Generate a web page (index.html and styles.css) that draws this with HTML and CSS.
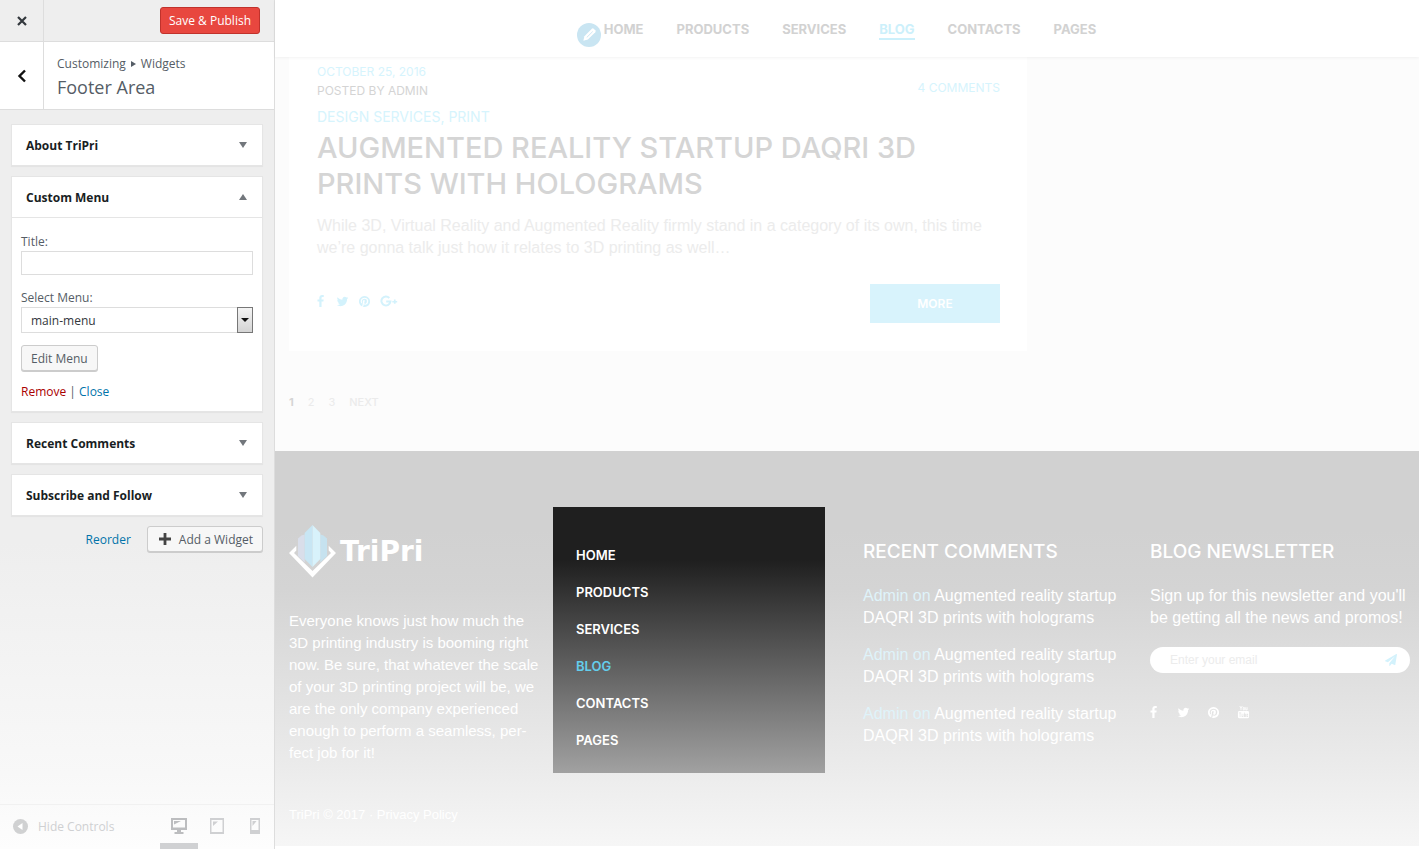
FILE: index.html
```html
<!DOCTYPE html>
<html lang="en">
<head>
<meta charset="utf-8">
<title>Customize: Footer Area</title>
<link rel="stylesheet" href="styles.css">
</head>
<body>
<svg class="sprite" aria-hidden="true">
  <symbol id="facebook" viewBox="0 0 1792 1792"><path d="M1343 12v264h-157q-86 0-116 36t-30 108v189h293l-39 296h-254v759h-306v-759h-255v-296h255v-218q0-186 104-288.5t277-102.5q147 0 228 12z"/></symbol>
  <symbol id="twitter" viewBox="0 0 1792 1792"><path d="M1684 408q-67 98-162 167 1 14 1 42 0 130-38 259.5t-115.5 248.5-184.5 210.5-258 146-323 54.5q-271 0-496-145 35 4 78 4 225 0 401-138-105-2-188-64.5t-114-159.5q33 5 61 5 43 0 85-11-112-23-185.5-111.5t-73.5-205.5v-4q68 38 146 41-66-44-105-115t-39-154q0-88 44-163 121 149 294.5 238.5t371.5 99.5q-8-38-8-74 0-134 94.5-228.5t228.5-94.5q140 0 236 102 109-21 205-78-37 115-142 178 93-10 186-50z"/></symbol>
  <symbol id="pinterest" viewBox="0 0 1792 1792"><path d="M1664 896q0 209-103 385.5t-279.5 279.5-385.5 103q-111 0-218-32 59-93 78-164 9-34 54-211 20 39 73 67.5t114 28.5q121 0 216-68.5t147-188.5 52-270q0-114-59.5-214t-172.5-163-255-63q-105 0-196 29t-154.5 77-109 110.5-67 129.5-21.5 134q0 104 40 183t117 111q30 12 38-20 2-7 8-31t8-30q6-23-11-43-51-61-51-151 0-151 104.5-259.5t273.5-108.5q151 0 235.5 82t84.5 213q0 170-68.5 289t-175.5 119q-61 0-98-43.5t-23-104.5q8-35 26.5-93.5t30-103 11.5-75.5q0-50-27-83t-77-33q-62 0-105 57t-43 142q0 73 25 122l-99 418q-17 70-13 177-206-91-333-281t-127-423q0-209 103-385.5t279.5-279.5 385.5-103 385.5 103 279.5 279.5 103 385.5z"/></symbol>
  <symbol id="google" viewBox="0 0 18 13"><path d="M9.3 3A4.5 4.5 0 1 0 10.4 6.6H6.2" fill="none" stroke="currentColor" stroke-width="2"/><path d="M13.9 4.6h1.7v1.3h1.6v1.6h-1.6v1.3h-1.7v-1.3h-1.6v-1.600h1.600z"/></symbol>
  <symbol id="youtube" viewBox="0 0 14 14"><path d="M3 0l1.300 2.500V4.500M5.700 0L4.300 2.500M6.700 1.500h1.200v2.700H6.700zM9.400 1.300v2.900h1.500V1.300" fill="none" stroke="currentColor" stroke-width=".9"/><path fill-rule="evenodd" d="M2.500 5.500h9Q13 5.500 13 7v4.500q0 1.800-1.500 1.800h-9Q1 13.300 1 11.500V7Q1 5.500 2.500 5.500zM2 7v.8h.9v4h.8v-4h.9V7zM5 8.400v3.400h1.900V8.400h-.6v2.700h-.6V8.400zM7.600 7v4.800h1.900V8.400h-1.200V7zM10.200 8.400v3.400h1.800v-1h-1v-.6h1V8.400z"/></symbol>
  <symbol id="plane" viewBox="0 0 1792 1792"><path d="M1764 11q33 24 27 64l-256 1536q-5 29-32 45-14 8-31 8-11 0-24-5l-453-185-242 295q-18 23-49 23-13 0-22-4-19-7-30.5-23.5t-11.500-36.500v-349l864-1059-1069 925-395-162q-37-14-40-55-2-40 32-59l1664-960q15-9 32-9 20 0 36 11z"/></symbol>
</svg>
<div class="app">
  <aside class="controls">
    <div class="topbar">
      <button class="close" aria-label="Close"><svg width="12" height="12" viewBox="0 0 12 12"><path d="M2 2l8 8M10 2l-8 8" stroke="#32373c" stroke-width="2.200" fill="none"/></svg></button>
      <button class="publish">Save &amp; Publish</button>
    </div>
    <div class="section-head">
      <button class="back" aria-label="Back"><svg width="12" height="14" viewBox="0 0 12 14"><path d="M9 1.500L3.500 7 9 12.500" stroke="#111" stroke-width="2.400" fill="none"/></svg></button>
      <div class="section-title">
        <span class="crumbs">Customizing <svg width="5" height="6" viewBox="0 0 5 6"><path d="M0 0l5 3-5 3z"/></svg> Widgets</span>
        <h1>Footer Area</h1>
      </div>
    </div>
    <div class="widgets">
      <section class="widget"><button class="widget-top">About TriPri <i class="caret"></i></button></section>
      <section class="widget">
        <button class="widget-top">Custom Menu <i class="caret up"></i></button>
        <form class="widget-form">
          <label for="w-title">Title:</label>
          <input id="w-title" type="text">
          <label class="menu-label" for="w-menu">Select Menu:</label>
          <div class="select">
            <select id="w-menu"><option>main-menu</option></select>
            <span class="select-arrow"></span>
          </div>
          <button type="button" class="btn">Edit Menu</button>
          <p class="links"><a class="remove" href="#">Remove</a> | <a href="#">Close</a></p>
        </form>
      </section>
      <section class="widget"><button class="widget-top">Recent Comments <i class="caret"></i></button></section>
      <section class="widget"><button class="widget-top">Subscribe and Follow <i class="caret"></i></button></section>
      <div class="widget-actions">
        <a href="#">Reorder</a>
        <button class="btn add"><svg width="12" height="12" viewBox="0 0 12 12"><path d="M6 0v12M0 6h12" stroke="#444" stroke-width="2.800"/></svg>Add a Widget</button>
      </div>
    </div>
    <div class="bottombar">
      <button class="hide"><svg width="15" height="15" viewBox="0 0 15 15"><circle cx="7.500" cy="7.500" r="7.500" fill="#d0d1d2"/><path d="M9.500 4v7l-5-3.500z" fill="#fff"/></svg>Hide Controls</button>
      <div class="devices">
        <button class="device active" aria-label="Desktop"><svg width="16" height="16" viewBox="0 0 16 16"><path fill-rule="evenodd" d="M0 0h16v12H10v2h2.500v2h-9v-2H6v-2H0zM2 2v7.500h12V2z"/><path d="M3 3h7L3 6.500z"/></svg></button>
        <button class="device" aria-label="Tablet"><svg width="14" height="16" viewBox="0 0 14 16"><path fill-rule="evenodd" d="M0 0h14v16H0zM1.500 2v12h11V2z"/><path d="M3 3.500h5L3 8z"/></svg></button>
        <button class="device" aria-label="Phone"><svg width="10" height="16" viewBox="0 0 10 16"><path fill-rule="evenodd" d="M0 0h10v16H0zM1.500 2v10h7V2z"/><path d="M2.500 3h4l-4 5z"/></svg></button>
      </div>
    </div>
  </aside>

  <div class="preview">
    <header class="site-head">
      <nav class="site-nav">
        <button class="edit" aria-label="Edit menu"><svg width="16" height="16" viewBox="0 0 14 14"><path d="M2 12l1-4 6.500-6.500q.8-.7 1.600 0l1.400 1.400q.7.800 0 1.600L6 11z" fill="#fff"/><path d="M5 9.200l5.300-5.300" stroke="#c9e5f2" stroke-width=".8"/></svg></button>
        <a href="#">HOME</a><a href="#">PRODUCTS</a><a href="#">SERVICES</a><a class="current" href="#">BLOG</a><a href="#">CONTACTS</a><a href="#">PAGES</a>
      </nav>
    </header>
    <main class="content">
      <article class="post">
        <div class="meta">
          <div><a class="date" href="#">OCTOBER 25, 2016</a><span class="author">POSTED BY ADMIN</span></div>
          <a class="count" href="#">4 COMMENTS</a>
        </div>
        <div class="cats"><a href="#">DESIGN SERVICES</a>, <a href="#">PRINT</a></div>
        <h2>AUGMENTED REALITY STARTUP DAQRI 3D PRINTS WITH HOLOGRAMS</h2>
        <p>While 3D, Virtual Reality and Augmented Reality firmly stand in a category of its own, this time we’re gonna talk just how it relates to 3D printing as well…</p>
        <div class="post-foot">
          <div class="share">
            <a href="#" aria-label="Facebook"><svg width="13" height="13"><use href="#facebook"/></svg></a>
            <a href="#" aria-label="Twitter"><svg width="13" height="13"><use href="#twitter"/></svg></a>
            <a href="#" aria-label="Pinterest"><svg width="13" height="13"><use href="#pinterest"/></svg></a>
            <a href="#" aria-label="Google Plus"><svg width="18" height="13"><use href="#google"/></svg></a>
          </div>
          <a class="more" href="#">MORE</a>
        </div>
      </article>
      <nav class="pages"><b>1</b><a href="#">2</a><a href="#">3</a><a href="#">NEXT</a></nav>
    </main>
    <footer class="site-foot">
      <div class="cols">
        <section class="about">
          <div class="logo">
            <svg width="47" height="53" viewBox="0 0 47 53"><path d="M7.300 20.800v4.700L5 28l18.500 18L42 28l-2.300-2.500v-4.700L47 28 23.500 52.500 0 28z" fill="#fff"/><path d="M9 13.500l3.500-3 3.200-1v28L9 31z" fill="#d9deea"/><path d="M38 13.500l-3.500-3-3.200-1v28L38 31z" fill="#c6e2ef"/><path d="M15.700 8l7.800-8v42l-7.800-8z" fill="#c8e6f4"/><path d="M31.300 8l-7.800-8v42l7.800-8z" fill="#d8f2fb"/></svg>
            <span>TriPri</span>
          </div>
          <p>Everyone knows just how much the<br>3D printing industry is booming right<br>now. Be sure, that whatever the scale<br>of your 3D printing project will be, we<br>are the only company experienced<br>enough to perform a seamless, per-<br>fect job for it!</p>
        </section>
        <nav class="foot-menu">
          <a href="#">HOME</a><a href="#">PRODUCTS</a><a href="#">SERVICES</a><a class="current" href="#">BLOG</a><a href="#">CONTACTS</a><a href="#">PAGES</a>
        </nav>
        <section class="col">
          <h3>RECENT COMMENTS</h3>
          <ul>
            <li><a href="#"><span>Admin on</span> Augmented reality startup DAQRI 3D prints with holograms</a></li>
            <li><a href="#"><span>Admin on</span> Augmented reality startup DAQRI 3D prints with holograms</a></li>
            <li><a href="#"><span>Admin on</span> Augmented reality startup DAQRI 3D prints with holograms</a></li>
          </ul>
        </section>
        <section class="col">
          <h3>BLOG NEWSLETTER</h3>
          <p>Sign up for this newsletter and you'll be getting all the news and promos!</p>
          <form class="subscribe">
            <input type="email" aria-label="Email" placeholder="Enter your email">
            <button type="button" aria-label="Subscribe"><svg width="12" height="12"><use href="#plane"/></svg></button>
          </form>
          <div class="social">
            <a href="#" aria-label="Facebook"><svg width="13" height="13"><use href="#facebook"/></svg></a>
            <a href="#" aria-label="Twitter"><svg width="13" height="13"><use href="#twitter"/></svg></a>
            <a href="#" aria-label="Pinterest"><svg width="13" height="13"><use href="#pinterest"/></svg></a>
            <a href="#" aria-label="YouTube"><svg width="13" height="13"><use href="#youtube"/></svg></a>
          </div>
        </section>
      </div>
      <p class="copy">TriPri © 2017 · <a href="#">Privacy Policy</a></p>
    </footer>
  </div>
</div>
</body>
</html>
```
FILE: styles.css
```css
* { box-sizing: border-box; }
body { margin: 0; font-family: "Open Sans", sans-serif; font-size: 12px; color: #555d66; background: #fff; }
h1, h2, h3, p, ul { margin: 0; padding: 0; font-weight: 400; }
ul { list-style: none; }
a { color: inherit; text-decoration: none; }
button, input, select { font: inherit; color: inherit; margin: 0; }
button { padding: 0; border: 0; background: none; }
svg { display: block; fill: currentColor; }
.sprite { display: none; }

.app { display: flex; min-height: 100vh; }

/* Controls panel */
.controls { display: flex; flex-direction: column; flex: 0 0 275px; border-right: 1px solid #ddd; background: linear-gradient(#eee 64%, #f8f8f8 91%, #fdfdfd); }
.topbar { display: flex; justify-content: space-between; align-items: center; height: 42px; padding-right: 14px; border-bottom: 1px solid #ddd; }
.close, .back { display: flex; align-items: center; justify-content: center; width: 44px; align-self: stretch; border-right: 1px solid #ddd; }
.publish { height: 27px; padding: 0 8px; border: 1px solid #c0322c; border-radius: 3px; background: #e8473f; color: #fff; }
.section-head { display: flex; background: #fff; border-bottom: 1px solid #ddd; }
.section-title { padding: 12px 13px 9px; }
.crumbs { display: flex; align-items: center; gap: 5px; line-height: 20px; }
h1 { font-size: 18px; line-height: 26px; }
.widgets { display: flex; flex-direction: column; gap: 10px; padding: 14px 11px; }
.widget { background: #fff; border: 1px solid #e5e5e5; box-shadow: 0 1px 1px rgba(0,0,0,.04); }
.widget-top { display: flex; justify-content: space-between; align-items: center; width: 100%; height: 40px; padding: 0 15px 0 14px; font-weight: 700; color: #191e23; }
.caret { border: 4px solid transparent; border-top: 6px solid #72777c; border-bottom: 0; }
.caret.up { border-top: 0; border-bottom: 6px solid #72777c; }
.widget-form { display: flex; flex-direction: column; align-items: flex-start; padding: 15px 9px 11px; border-top: 1px solid #e5e5e5; }
.widget-form label { line-height: 17px; margin-bottom: 1px; }
.widget-form input { width: 100%; height: 24px; border: 1px solid #ddd; }
.widget-form .menu-label { margin-top: 14px; }
.select { display: grid; width: 100%; height: 26px; }
.select select, .select-arrow { grid-area: 1 / 1; }
.select select { appearance: none; width: 100%; padding: 0 9px; border: 1px solid #ddd; border-radius: 0; background: #fff; color: #32373c; }
.select-arrow { display: flex; align-items: center; justify-content: center; justify-self: end; width: 16px; border: 1px solid #777; background: linear-gradient(#f4f4f4, #d4d4d4); pointer-events: none; }
.select-arrow::after { content: ""; border: 4px solid transparent; border-top-color: #111; border-bottom: 0; }
.btn { height: 26px; padding: 0 9px; border: 1px solid #ccc; border-radius: 3px; background: #f7f7f7; box-shadow: 0 1px 0 #ccc; }
.widget-form .btn { margin-top: 12px; }
.links { margin-top: 12px; line-height: 17px; }
.links a, .widget-actions a { color: #0073aa; }
.links .remove { color: #a00; }
.widget-actions { display: flex; justify-content: flex-end; align-items: center; gap: 16px; }
.add { display: flex; align-items: center; gap: 8px; padding-left: 11px; }
.bottombar { display: flex; justify-content: space-between; align-items: stretch; height: 45px; margin-top: auto; padding-left: 13px; border-top: 1px solid #f1f1f1; color: #cfd0d2; }
.hide { display: flex; align-items: center; gap: 10px; padding-bottom: 2px; }
.devices { display: flex; }
.device { display: flex; align-items: center; justify-content: center; width: 38px; border-bottom: 6px solid transparent; padding-top: 4px; }
.device.active { color: #bcbdbf; border-bottom-color: #d0d1d3; }

/* Site preview */
.preview { display: flex; flex-direction: column; flex: 1; min-width: 0; padding-bottom: 3px; font-family: "Liberation Sans", Arial, sans-serif; font-size: 16px; line-height: 22px; }
.site-head { display: flex; justify-content: center; align-items: center; height: 57px; padding-top: 2px; background: #fff; box-shadow: 0 1px 3px rgba(0,0,0,.05); z-index: 1; }
.site-nav { position: relative; display: flex; gap: 33px; padding-left: 6px; font: 700 13px/18px Inter, sans-serif; color: #d2d2d2; }
.site-nav .current { color: #ccf0fb; border-bottom: 2px solid #ccf0fb; }
.edit { position: absolute; left: -21px; top: 3px; display: flex; align-items: center; justify-content: center; width: 24px; height: 24px; border-radius: 50%; background: #c9e5f2; }
.content { padding: 0 14px 39px; background: #fcfcfc; }
.post { max-width: 738px; padding: 7px 27px 28px 28px; background: #fff; color: #ececec; }
.meta { display: flex; justify-content: space-between; align-items: center; font: 400 12px/16px Inter, sans-serif; }
.meta div { display: flex; flex-direction: column; gap: 3px; }
.date, .count, .cats { color: #d6f4fd; }
.count { padding-top: 12px; }
.author { color: #d4d4d4; }
.cats { margin-top: 8px; font: 14px/20px Inter, sans-serif; }
h2 { margin: 3px 0 13px; font: 500 29px/36px Inter, sans-serif; color: #d5d5d5; }
.post-foot { display: flex; justify-content: space-between; align-items: center; margin-top: 25px; }
.share { display: flex; gap: 9px; margin-left: -3px; padding-bottom: 4px; color: #d3f2fc; }
.more { width: 130px; font: 600 12px/39px Inter, sans-serif; text-align: center; background: #d8f3fc; color: #fff; }
.pages { display: flex; gap: 14px; margin-top: 41px; font: 11px/20px Inter, sans-serif; color: #ebebeb; }
.pages b { color: #d5d5d5; }
.pages a:last-child { font-weight: 500; }

.site-foot { flex: 1; display: flex; flex-direction: column; padding: 56px 9px 20px 14px; background: linear-gradient(#d1d1d1 20%, #d4d4d4 35%, #ebebeb 80%, #f6f6f6); color: #fff; }
.cols { display: grid; grid-template-columns: repeat(4, minmax(0, 1fr)); gap: 27px; }
.about { padding-top: 18px; }
.logo { display: flex; align-items: center; gap: 4px; font: 700 28px/53px "DejaVu Sans", sans-serif; }
.about p { margin-top: 32px; font-size: 15px; }
.foot-menu { display: flex; flex-direction: column; gap: 15px; margin: 0 11px 0 -23px; padding: 37px 23px 22px; background: linear-gradient(#1f1f1f 20%, #a1a1a1); font: 600 13px/22px Inter, sans-serif; color: #fff; }
.foot-menu .current { color: #64cdec; }
.col { padding-top: 33px; }
h3 { margin-bottom: 22px; font: 500 19px/23px Inter, sans-serif; }
ul { display: flex; flex-direction: column; gap: 15px; }
li span { color: #dff3fa; }
.subscribe { display: flex; align-items: center; height: 26px; margin-top: 18px; padding: 0 13px 0 20px; border-radius: 13px; background: #fff; color: #d3f2fc; }
.subscribe input { flex: 1; min-width: 0; padding: 0; border: 0; background: none; font-size: 12px; }
.subscribe input::placeholder { color: #ececec; }
.social { display: flex; gap: 17px; margin: 33px 0 0 -3px; }
.copy { margin-top: auto; font-size: 13px; }
```
